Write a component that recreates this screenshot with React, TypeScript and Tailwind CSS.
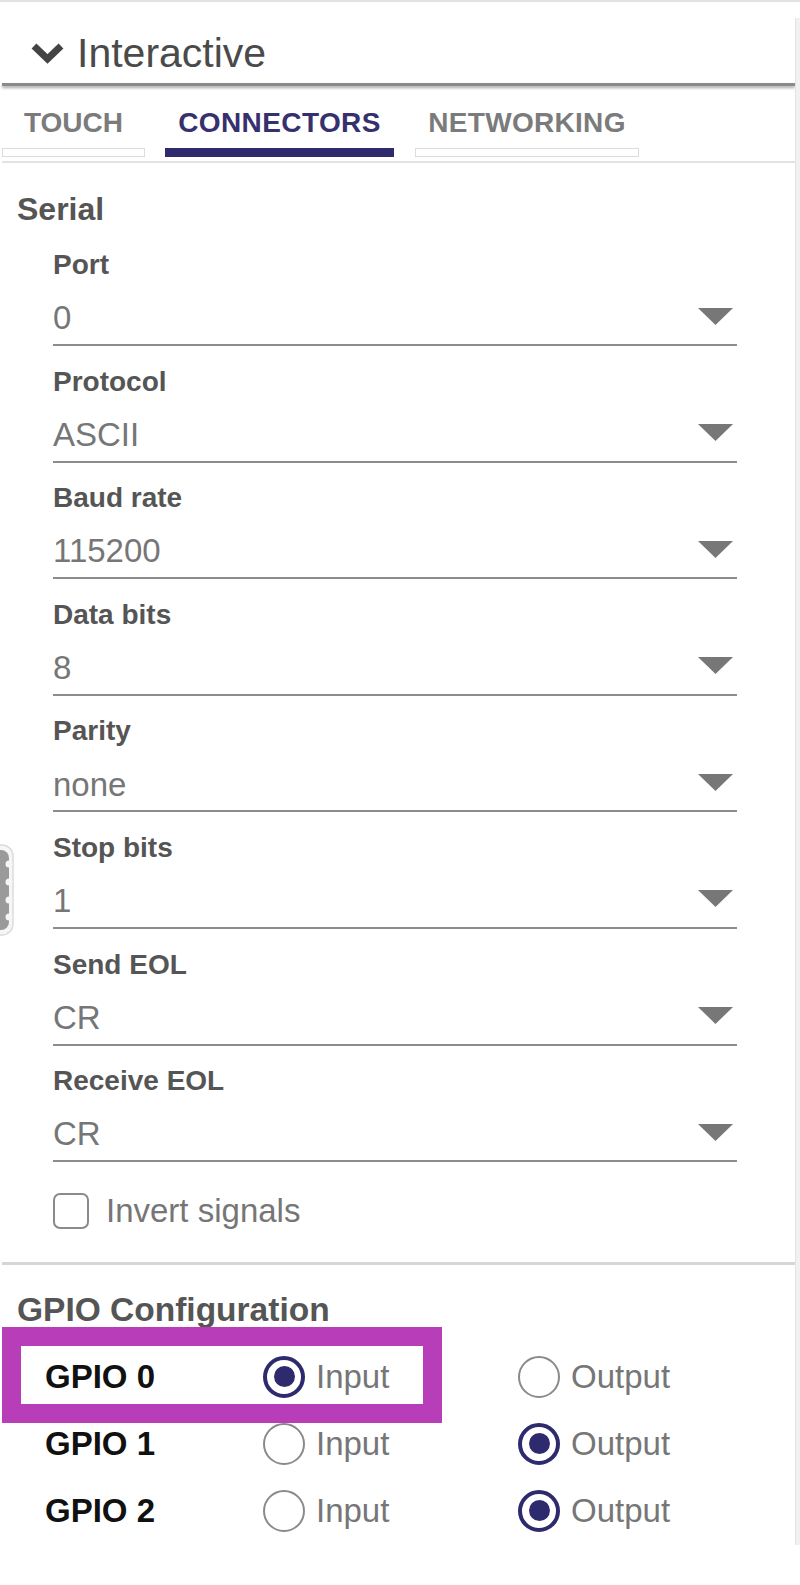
import React from "react";

const fields = [
  { label: "Port", value: "0" },
  { label: "Protocol", value: "ASCII" },
  { label: "Baud rate", value: "115200" },
  { label: "Data bits", value: "8" },
  { label: "Parity", value: "none" },
  { label: "Stop bits", value: "1" },
  { label: "Send EOL", value: "CR" },
  { label: "Receive EOL", value: "CR" },
];

const gpios = [
  { name: "GPIO 0", input: true },
  { name: "GPIO 1", input: false },
  { name: "GPIO 2", input: false },
];

function Radio({ checked, label }: { checked: boolean; label: string }) {
  return (
    <div className="flex items-center gap-[11px]">
      {checked ? (
        <span className="w-[42px] h-[42px] rounded-full border-[4px] border-[#2e2a6e] flex items-center justify-center">
          <span className="w-[21px] h-[21px] rounded-full bg-[#2e2a6e]" />
        </span>
      ) : (
        <span className="w-[42px] h-[42px] rounded-full border-[2.5px] border-[#8a8a8a]" />
      )}
      <span className="text-[33px] leading-[40px] text-[#767676]">{label}</span>
    </div>
  );
}

function Field({ label, value }: { label: string; value: string }) {
  return (
    <div className="h-[116.6px] pl-[51px]">
      <div className="h-[34px] leading-[34px] text-[28px] font-bold text-[#555]">{label}</div>
      <div className="mt-[10px] w-[684px] h-[52px] flex items-center justify-between">
        <span className="text-[33px] text-[#767676]">{value}</span>
        <svg width="35" height="17" viewBox="0 0 35 17" className="mr-[4px] mb-[4px]">
          <polygon points="0,0 35,0 17.5,17" fill="#777" />
        </svg>
      </div>
      <div className="w-[684px] h-[2px] bg-[#8c8c8c]" />
    </div>
  );
}

export default function App() {
  return (
    <div className="relative w-[800px] h-[1585px] bg-white overflow-hidden font-['Liberation_Sans',Arial,sans-serif]">
      <div className="h-[2px] bg-[#e2e2e2]" />

      {/* scrollbar strip */}
      <div className="absolute right-0 top-[18px] h-[1527px] w-[5px] bg-[#f1f1f1] border-l border-[#e3e3e3]" />

      {/* left grip handle */}
      <svg className="absolute left-0 top-[844px]" width="15" height="92" viewBox="0 0 15 92">
        <rect x="-12" y="1" width="25" height="90" rx="11" fill="#f6f6f6" stroke="#dcdcdc" strokeWidth="1.5" />
        <rect x="-12" y="6" width="21" height="80" rx="8" fill="#9a9a9a" />
        <circle cx="9" cy="20" r="3.5" fill="#f6f6f6" />
        <circle cx="9" cy="38" r="3.5" fill="#f6f6f6" />
        <circle cx="9" cy="56" r="3.5" fill="#f6f6f6" />
        <circle cx="9" cy="73" r="3.5" fill="#f6f6f6" />
      </svg>

      <div className="ml-[2px] w-[793px]">
        {/* header */}
        <div className="pt-[29px] pb-[8px] pl-[28px] flex items-center gap-[12px]">
          <svg width="35" height="22" viewBox="0 0 35 22">
            <polyline points="4,4 17.5,17 31,4" fill="none" stroke="#444" strokeWidth="7" />
          </svg>
          <span className="text-[41px] leading-[44px] text-[#4a4a4a]">Interactive</span>
        </div>
        <div className="h-[3px] bg-[#8a8a8a] shadow-[0_2px_3px_rgba(0,0,0,0.35)]" />

        {/* tabs */}
        <div className="flex pt-[21px] pb-[4px]">
          <div className="w-[143px] flex flex-col items-center">
            <span className="h-[32px] leading-[32px] text-[28px] font-bold text-[#7b7b7b]">TOUCH</span>
            <span className="mt-[9px] w-full h-[9px] border-[1.5px] border-[#dcdcdc] bg-white" />
          </div>
          <div className="ml-[20px] w-[229px] flex flex-col items-center">
            <span className="h-[32px] leading-[32px] text-[28px] font-bold text-[#36306e] tracking-[0.4px]">CONNECTORS</span>
            <span className="mt-[9px] w-full h-[9px] bg-[#2f2a6b]" />
          </div>
          <div className="ml-[21px] w-[224px] flex flex-col items-center">
            <span className="h-[32px] leading-[32px] text-[28px] font-bold text-[#7b7b7b] tracking-[0.3px]">NETWORKING</span>
            <span className="mt-[9px] w-full h-[9px] border-[1.5px] border-[#dcdcdc] bg-white" />
          </div>
        </div>
        <div className="h-[2px] bg-[#e3e3e3]" />

        {/* serial */}
        <div className="mt-[26px] pl-[15px] h-[40px] leading-[40px] text-[32px] font-bold text-[#555]">Serial</div>
        <div className="mt-[19px]">
          {fields.map((f) => (
            <Field key={f.label} label={f.label} value={f.value} />
          ))}
        </div>

        <div className="mt-[12px] pl-[51px] h-[36px] flex items-center gap-[17px]">
          <span className="w-[36px] h-[36px] rounded-[7px] border-[2.5px] border-[#8a8a8a]" />
          <span className="text-[33px] text-[#767676]">Invert signals</span>
        </div>

        <div className="mt-[33px] h-[3px] bg-[#d6d6d6]" />

        {/* gpio */}
        <div className="mt-[25px] pl-[15px] h-[40px] leading-[40px] text-[33.5px] font-bold text-[#555]">
          GPIO Configuration
        </div>
        <div className="relative mt-[13.5px]">
          {gpios.map((g) => (
            <div key={g.name} className="h-[67px] flex items-center pl-[43px]">
              <span className="w-[218px] text-[33px] font-bold text-[#111]">{g.name}</span>
              <div className="w-[255px]">
                <Radio checked={g.input} label="Input" />
              </div>
              <Radio checked={!g.input} label="Output" />
            </div>
          ))}
          <div className="absolute left-0 top-[-16px] w-[440px] h-[96px] border-[19px] border-[#b83db8]" />
        </div>
      </div>
    </div>
  );
}
